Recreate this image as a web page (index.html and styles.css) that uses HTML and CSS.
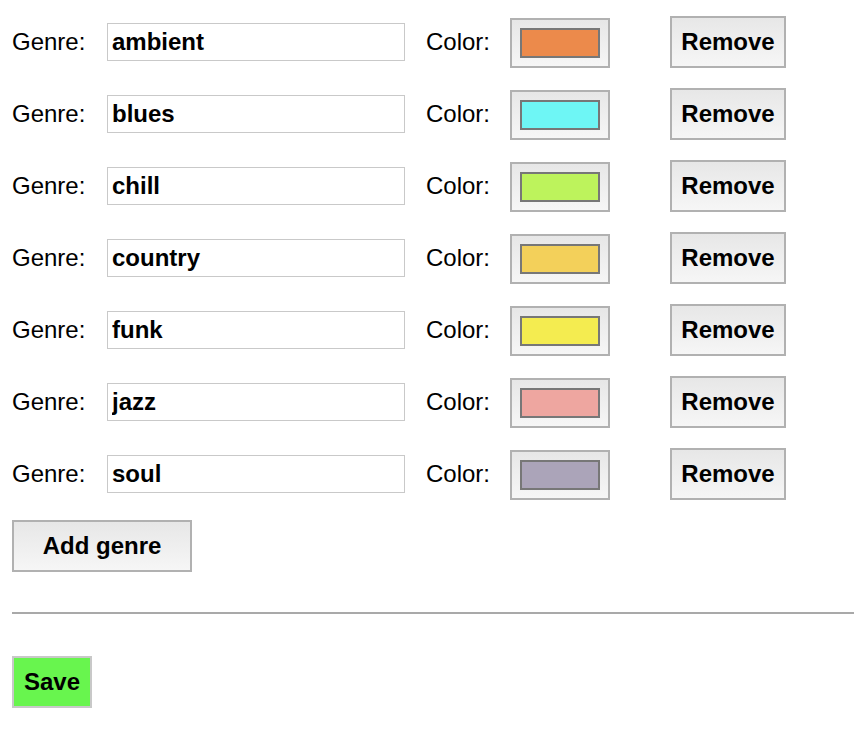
FILE: index.html
```html
<!DOCTYPE html>
<html>
<head>
<meta charset="utf-8">
<link rel="stylesheet" href="styles.css">
</head>
<body>
<div class="page">
  <div class="genres">
    <div class="row">
      <label class="lbl lbl-genre">Genre:</label>
      <input class="name" type="text" value="ambient">
      <label class="lbl lbl-color">Color:</label>
      <button class="swatch-btn"><span class="swatch" style="background:#ec8a4b"></span></button>
      <button class="btn remove">Remove</button>
    </div>
    <div class="row">
      <label class="lbl lbl-genre">Genre:</label>
      <input class="name" type="text" value="blues">
      <label class="lbl lbl-color">Color:</label>
      <button class="swatch-btn"><span class="swatch" style="background:#6ef6f5"></span></button>
      <button class="btn remove">Remove</button>
    </div>
    <div class="row">
      <label class="lbl lbl-genre">Genre:</label>
      <input class="name" type="text" value="chill">
      <label class="lbl lbl-color">Color:</label>
      <button class="swatch-btn"><span class="swatch" style="background:#bdf35c"></span></button>
      <button class="btn remove">Remove</button>
    </div>
    <div class="row">
      <label class="lbl lbl-genre">Genre:</label>
      <input class="name" type="text" value="country">
      <label class="lbl lbl-color">Color:</label>
      <button class="swatch-btn"><span class="swatch" style="background:#f3d05a"></span></button>
      <button class="btn remove">Remove</button>
    </div>
    <div class="row">
      <label class="lbl lbl-genre">Genre:</label>
      <input class="name" type="text" value="funk">
      <label class="lbl lbl-color">Color:</label>
      <button class="swatch-btn"><span class="swatch" style="background:#f4ec50"></span></button>
      <button class="btn remove">Remove</button>
    </div>
    <div class="row">
      <label class="lbl lbl-genre">Genre:</label>
      <input class="name" type="text" value="jazz">
      <label class="lbl lbl-color">Color:</label>
      <button class="swatch-btn"><span class="swatch" style="background:#eea6a0"></span></button>
      <button class="btn remove">Remove</button>
    </div>
    <div class="row">
      <label class="lbl lbl-genre">Genre:</label>
      <input class="name" type="text" value="soul">
      <label class="lbl lbl-color">Color:</label>
      <button class="swatch-btn"><span class="swatch" style="background:#aba4b9"></span></button>
      <button class="btn remove">Remove</button>
    </div>
  </div>
  <button class="btn add">Add genre</button>
  <hr class="divider">
  <button class="btn save">Save</button>
</div>
</body>
</html>
```

FILE: styles.css
```css
html, body {
  margin: 0;
  padding: 0;
  background: #ffffff;
}

body {
  font-family: "Liberation Sans", Arial, Helvetica, sans-serif;
  font-size: 24px;
  color: #000;
}

.page {
  padding: 16px 0 0 12px;
  display: flex;
  flex-direction: column;
  align-items: flex-start;
}

.genres {
  display: flex;
  flex-direction: column;
  gap: 20px;
}

.row {
  display: flex;
  align-items: center;
  height: 52px;
}

.lbl {
  font-size: 24px;
  line-height: 28px;
}

.lbl-genre {
  width: 95px;
}

.lbl-color {
  width: 84px;
  margin-left: 21px;
}

.name {
  box-sizing: border-box;
  width: 298px;
  height: 38px;
  margin: 0;
  border: 1px solid #c9c9c9;
  border-radius: 0;
  padding: 0 4px;
  font-family: "Liberation Sans", Arial, Helvetica, sans-serif;
  font-size: 24px;
  font-weight: bold;
  color: #000;
  background: #fff;
  outline: none;
}

.swatch-btn {
  box-sizing: border-box;
  align-self: flex-end;
  width: 100px;
  height: 50px;
  margin: 0;
  padding: 0;
  border: 2px solid #b1b1b1;
  border-radius: 0;
  background: linear-gradient(#e7e7e7, #f6f6f6);
  display: flex;
  align-items: center;
  justify-content: center;
}

.swatch {
  box-sizing: border-box;
  display: block;
  width: 80px;
  height: 30px;
  border: 2px solid #777777;
}

.btn {
  box-sizing: border-box;
  height: 52px;
  margin: 0;
  padding: 0;
  border: 2px solid #b1b1b1;
  border-radius: 0;
  background: linear-gradient(#e7e7e7, #f6f6f6);
  font-family: "Liberation Sans", Arial, Helvetica, sans-serif;
  font-size: 24px;
  font-weight: bold;
  color: #000;
}

.remove {
  width: 116px;
  margin-left: 60px;
}

.add {
  width: 180px;
  margin-top: 20px;
}

.divider {
  align-self: stretch;
  height: 0;
  margin: 40px 0 0 0;
  border: none;
  border-top: 2px solid #a9a9a9;
}

.save {
  width: 80px;
  margin-top: 42px;
  background: #68f54e;
  border-color: #c8c8c8;
}
```
